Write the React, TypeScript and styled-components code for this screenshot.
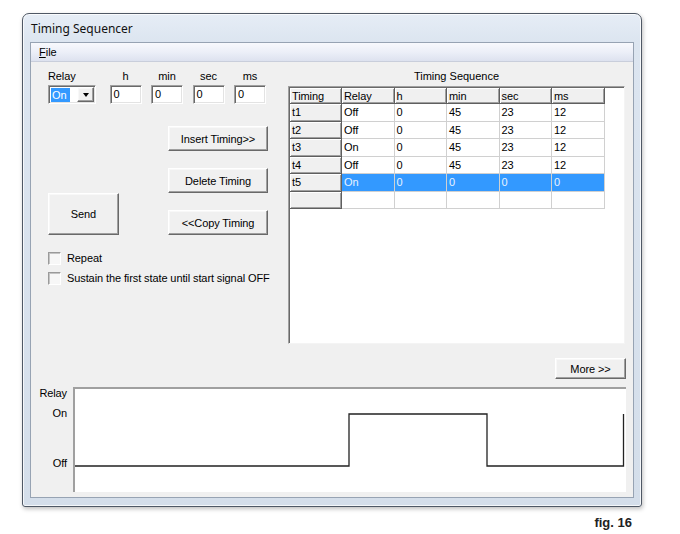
import React from "react";
import styled, { createGlobalStyle, css } from "styled-components";

const Global = createGlobalStyle`
  html, body { margin: 0; padding: 0; background: #ffffff; }
  body { width: 680px; height: 534px; overflow: hidden; font-family: "Liberation Sans", Arial, sans-serif; }
  * { box-sizing: border-box; }
`;

const sunken = css`
  border-style: solid;
  border-width: 1px;
  border-color: #a0a0a0 #ffffff #ffffff #a0a0a0;
  box-shadow: inset 1px 1px 0 #696969, inset -1px -1px 0 #e3e3e3;
`;

const raised = css`
  border-style: solid;
  border-width: 1px;
  border-color: #ffffff #696969 #696969 #ffffff;
  box-shadow: inset -1px -1px 0 #a0a0a0, inset 1px 1px 0 #f8f8f8;
  background: #f0f0f0;
`;

const Page = styled.div`
  padding: 13px 0 0 22px;
`;

const Window = styled.div`
  width: 620px;
  border: 1px solid #4f5865;
  border-radius: 7px 7px 3px 3px;
  background: linear-gradient(180deg, #e6edf6 0px, #dce5f0 28px, #d4deea 100%);
  padding: 0 7px 8px;
  box-shadow: 1px 2px 4px rgba(0, 0, 0, 0.25), inset 0 0 0 1px rgba(255, 255, 255, 0.75);
`;

const TitleBar = styled.div`
  height: 28px;
  display: flex;
  align-items: center;
  padding-left: 1px;
  font-family: "Noto Sans", "Open Sans", sans-serif;
  font-size: 12px;
  color: #111;
`;

const Client = styled.div`
  border: 1px solid #97a3b3;
  background: #f0f0f0;
`;

const MenuBar = styled.div`
  height: 19px;
  display: flex;
  align-items: center;
  padding-left: 8px;
  font-size: 11px;
  color: #000;
  background: linear-gradient(180deg, #f8f9fd 0%, #eceff8 50%, #dde2ef 100%);
  border-bottom: 1px solid #c9cedb;
  u { text-decoration: underline; }
`;

const Content = styled.div`
  padding: 5px 8px 5px 17px;
  font-size: 11px;
  letter-spacing: -0.1px;
  color: #000;
`;

const TopSection = styled.div`
  display: grid;
  grid-template-columns: 1fr 337px;
`;

const LeftColumn = styled.div`
  display: flex;
  flex-direction: column;
`;

const FieldRow = styled.div`
  display: flex;
  align-items: flex-end;
`;

const Field = styled.div<{ $align: "flex-start" | "center"; $width: number; $gap: number }>`
  display: flex;
  flex-direction: column;
  align-items: ${(p) => p.$align};
  width: ${(p) => p.$width}px;
  margin-right: ${(p) => p.$gap}px;
`;

const FieldLabel = styled.div`
  height: 18px;
  line-height: 18px;
  white-space: nowrap;
`;

const Combo = styled.div`
  ${sunken};
  width: 48px;
  height: 19px;
  background: #fff;
  display: flex;
  align-items: center;
  padding: 0 1px 0 1px;
`;

const Selected = styled.span`
  background: #3399ff;
  color: #fff;
  height: 14px;
  line-height: 14px;
  padding: 0 4px 0 1px;
  margin-left: 1px;
`;

const DropButton = styled.div`
  ${raised};
  margin-left: auto;
  width: 17px;
  height: 15px;
  display: flex;
  align-items: center;
  justify-content: center;
  &::after {
    content: "";
    border-left: 3.5px solid transparent;
    border-right: 3.5px solid transparent;
    border-top: 4px solid #000;
    margin-top: 1px;
  }
`;

const TextBox = styled.div`
  ${sunken};
  width: 32px;
  height: 19px;
  background: #fff;
  padding-left: 3px;
  line-height: 17px;
`;

const ButtonsArea = styled.div`
  display: grid;
  grid-template-columns: 71px 100px;
  column-gap: 49px;
  margin-top: 22px;
`;

const ButtonStack = styled.div`
  display: flex;
  flex-direction: column;
  gap: 17px;
`;

const Button = styled.button<{ $w?: number; $h: number }>`
  ${raised};
  width: ${(p) => (p.$w ? `${p.$w}px` : "100%")};
  height: ${(p) => p.$h}px;
  font-family: "Liberation Sans", Arial, sans-serif;
  font-size: 11px;
  letter-spacing: -0.1px;
  color: #000;
  padding: 0;
  align-self: end;
  cursor: default;
`;

const Checks = styled.div`
  display: flex;
  flex-direction: column;
  margin-top: 13px;
`;

const CheckRow = styled.label`
  height: 20px;
  display: flex;
  align-items: center;
  gap: 6px;
  white-space: nowrap;
`;

const CheckBox = styled.span`
  width: 13px;
  height: 13px;
  border-style: solid;
  border-width: 1px;
  border-color: #9a9a9a #ffffff #ffffff #9a9a9a;
  box-shadow: inset 1px 1px 0 #c4c4c4;
  background: #f7f7f7;
`;

const RightColumn = styled.div`
  display: flex;
  flex-direction: column;
`;

const SectionTitle = styled.div`
  height: 19px;
  line-height: 18px;
  text-align: center;
  letter-spacing: 0;
`;

const GridBox = styled.div`
  border-style: solid;
  border-width: 1px;
  border-color: #a0a0a0 #f4f4f4 #f4f4f4 #a0a0a0;
  box-shadow: inset 1px 1px 0 #696969;
  height: 258px;
  background: #fff;
  overflow: hidden;
`;

const TableGrid = styled.div`
  display: grid;
  grid-template-columns: 52px repeat(5, 52.5px);
  grid-template-rows: 16px repeat(6, 17.5px);
  width: max-content;
  margin: 1px 0 0 1px;
`;

const Cell = styled.div<{ $kind: "head" | "rowhead" | "data"; $selected?: boolean }>`
  padding-left: 2px;
  line-height: 16px;
  white-space: nowrap;
  overflow: hidden;
  ${(p) =>
    p.$kind === "data"
      ? css`
          background: ${p.$selected ? "#3399ff" : "#ffffff"};
          color: ${p.$selected ? "#e8f3ff" : "#000"};
          border-right: 1px solid #d0d0d0;
          border-bottom: 1px solid #d0d0d0;
        `
      : css`
          background: #f0f0f0;
          border-right: 1px solid #5f5f5f;
          border-bottom: 1px solid #5f5f5f;
          box-shadow: inset 1px 1px 0 #ffffff, inset -1px -1px 0 #a0a0a0;
        `}
`;

const MoreRow = styled.div`
  display: flex;
  justify-content: flex-end;
  margin-top: 14px;
  margin-right: -1px;
`;

const ChartSection = styled.div`
  display: grid;
  grid-template-columns: 42px 1fr;
  margin-top: 8px;
  margin-left: -17px;
`;

const ChartLabels = styled.div`
  display: flex;
  flex-direction: column;
  align-items: flex-end;
  padding-right: 6px;
`;

const ChartLabel = styled.div<{ $mt: number }>`
  height: 14px;
  line-height: 14px;
  margin-top: ${(p) => p.$mt}px;
`;

const Chart = styled.div`
  height: 105px;
  border-top: 2px solid #a0a0a0;
  border-left: 2px solid #a0a0a0;
  background: #fff;
  svg { display: block; }
`;

const Caption = styled.div`
  width: 620px;
  display: flex;
  justify-content: flex-end;
  padding-right: 10px;
  margin-top: 8px;
  font-family: "Liberation Sans", Arial, sans-serif;
  font-weight: bold;
  font-size: 13px;
  color: #222;
`;

const headers = ["Timing", "Relay", "h", "min", "sec", "ms"];
const rows: { cells: string[]; selected?: boolean }[] = [
  { cells: ["t1", "Off", "0", "45", "23", "12"] },
  { cells: ["t2", "Off", "0", "45", "23", "12"] },
  { cells: ["t3", "On", "0", "45", "23", "12"] },
  { cells: ["t4", "Off", "0", "45", "23", "12"] },
  { cells: ["t5", "On", "0", "0", "0", "0"], selected: true },
  { cells: ["", "", "", "", "", ""] },
];

const numberFields = ["h", "min", "sec", "ms"];

export default function App() {
  return (
    <>
      <Global />
      <Page>
        <Window>
          <TitleBar>Timing Sequencer</TitleBar>
          <Client>
            <MenuBar>
              <span>
                <u>F</u>ile
              </span>
            </MenuBar>
            <Content>
              <TopSection>
                <LeftColumn>
                  <FieldRow>
                    <Field $align="flex-start" $width={48} $gap={13.5}>
                      <FieldLabel>Relay</FieldLabel>
                      <Combo>
                        <Selected>On</Selected>
                        <DropButton />
                      </Combo>
                    </Field>
                    {numberFields.map((f, i) => (
                      <Field key={f} $align="center" $width={32} $gap={i < 3 ? 9.5 : 0}>
                        <FieldLabel>{f}</FieldLabel>
                        <TextBox>0</TextBox>
                      </Field>
                    ))}
                  </FieldRow>
                  <ButtonsArea>
                    <Button $h={42}>Send</Button>
                    <ButtonStack>
                      <Button $h={25}>Insert Timing&gt;&gt;</Button>
                      <Button $h={25}>Delete Timing</Button>
                      <Button $h={25}>&lt;&lt;Copy Timing</Button>
                    </ButtonStack>
                  </ButtonsArea>
                  <Checks>
                    <CheckRow>
                      <CheckBox />
                      Repeat
                    </CheckRow>
                    <CheckRow>
                      <CheckBox />
                      Sustain the first state until start signal OFF
                    </CheckRow>
                  </Checks>
                </LeftColumn>
                <RightColumn>
                  <SectionTitle>Timing Sequence</SectionTitle>
                  <GridBox>
                    <TableGrid>
                      {headers.map((h) => (
                        <Cell key={h} $kind="head">
                          {h}
                        </Cell>
                      ))}
                      {rows.map((r, ri) =>
                        r.cells.map((c, ci) => (
                          <Cell
                            key={`${ri}-${ci}`}
                            $kind={ci === 0 ? "rowhead" : "data"}
                            $selected={r.selected && ci > 0}
                          >
                            {c}
                          </Cell>
                        ))
                      )}
                    </TableGrid>
                  </GridBox>
                  <MoreRow>
                    <Button $w={71} $h={21}>
                      More &gt;&gt;
                    </Button>
                  </MoreRow>
                </RightColumn>
              </TopSection>
              <ChartSection>
                <ChartLabels>
                  <ChartLabel $mt={-1}>Relay</ChartLabel>
                  <ChartLabel $mt={6}>On</ChartLabel>
                  <ChartLabel $mt={36}>Off</ChartLabel>
                </ChartLabels>
                <Chart>
                  <svg width="551" height="103" viewBox="0 0 551 103">
                    <polyline
                      points="0,77 274,77 274,25 412,25 412,77 548.5,77 548.5,25"
                      fill="none"
                      stroke="#222"
                      strokeWidth="1.3"
                    />
                  </svg>
                </Chart>
              </ChartSection>
            </Content>
          </Client>
        </Window>
        <Caption>fig. 16</Caption>
      </Page>
    </>
  );
}
